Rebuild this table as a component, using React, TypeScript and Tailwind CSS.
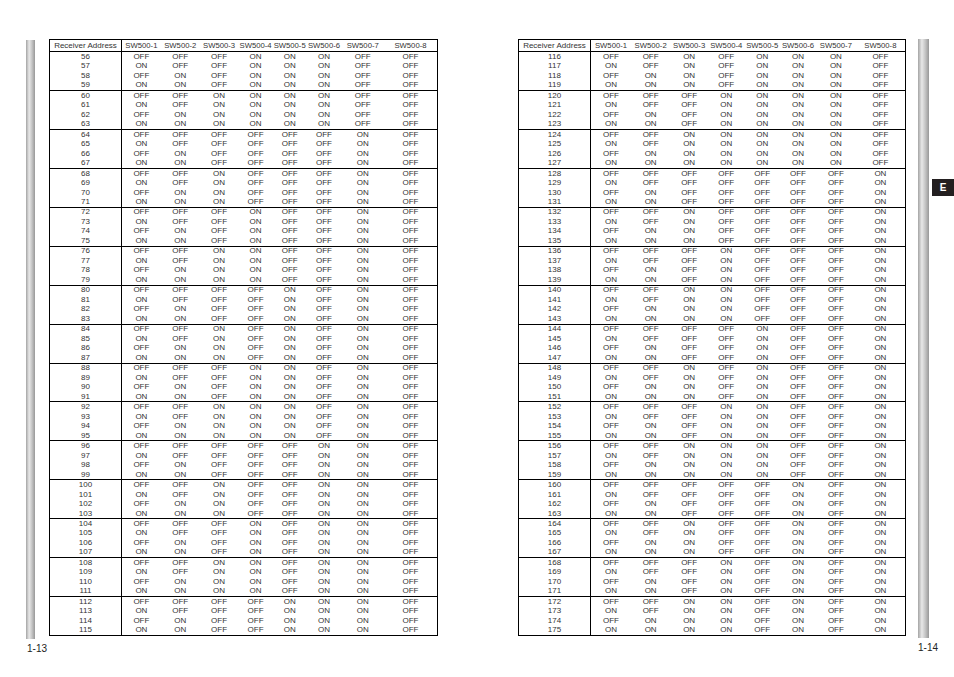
const SWITCHES = [1, 2, 3, 4, 5, 6, 7, 8];

const leftCols =
  "grid-cols-[72px_38.75px_39px_38.6px_34.5px_33.65px_35px_42.5px_1fr]";
const rightCols =
  "grid-cols-[72px_40px_39.25px_37.75px_36.5px_35.5px_36px_39.75px_1fr]";

function groupsFrom(start: number) {
  // 60 addresses, shown in blocks of four
  return Array.from({ length: 15 }, (_, g) =>
    Array.from({ length: 4 }, (_, r) => start + g * 4 + r)
  );
}

function SwitchTable({
  start,
  cols,
  className
}: {
  start: number;
  cols: string;
  className: string;
}) {
  return (
    <div
      className={`flex h-[597px] flex-col border border-black text-[8px] leading-none text-[#333] ${className}`}
    >
      <div
        className={`grid h-[12px] shrink-0 items-center border-b border-black text-[7.7px] ${cols}`}
      >
        <div className="flex h-full items-center justify-center border-r border-black text-[8px]">
          Receiver Address
        </div>
        {SWITCHES.map((n) => (
          <div key={n} className="flex justify-center whitespace-nowrap">
            SW500-{n}
          </div>
        ))}
      </div>
      <div className="flex min-h-0 flex-1 flex-col">
        {groupsFrom(start).map((rows, g) => (
          <div
            key={g}
            className={`flex flex-1 flex-col ${g > 0 ? "border-t border-black" : ""}`}
          >
            {rows.map((addr) => (
              <div key={addr} className={`grid flex-1 items-center ${cols}`}>
                <div className="flex h-full items-center justify-center border-r border-black">
                  {addr}
                </div>
                {SWITCHES.map((n) => (
                  <div key={n} className="flex justify-center">
                    {(addr >> (n - 1)) & 1 ? "ON" : "OFF"}
                  </div>
                ))}
              </div>
            ))}
          </div>
        ))}
      </div>
    </div>
  );
}

function EdgeBar({ className }: { className: string }) {
  return (
    <div
      className={`h-[599px] shrink-0 bg-[linear-gradient(to_right,#a4a4a4,#e8e8e8_35%,#c6c6c6_65%,#989898)] ${className}`}
    />
  );
}

export default function App() {
  return (
    <div className="flex h-[677px] w-[954px] overflow-hidden bg-white font-['Liberation_Sans',Arial,sans-serif] text-black">
      <section className="flex w-[477px] flex-col pt-[39px]">
        <div className="flex items-start pl-[26px]">
          <EdgeBar className="mt-[1px] w-[9px]" />
          <SwitchTable start={56} cols={leftCols} className="ml-[14px] w-[389px]" />
        </div>
        <div className="mt-[5px] pl-[27px] text-[10px] leading-[10px] text-[#222]">1-13</div>
      </section>

      <section className="flex w-[477px] flex-col pt-[39px]">
        <div className="flex items-start pl-[41px]">
          <SwitchTable start={116} cols={rightCols} className="w-[388px]" />
          <EdgeBar className="ml-[12px] w-[11px]" />
          <div className="ml-[3px] mt-[140px] flex h-[17px] w-[22px] items-center justify-center bg-[#231f20] text-[10px] font-bold leading-none text-white">
            E
          </div>
        </div>
        <div className="mt-[5px] pl-[441px] text-[10px] leading-[10px] text-[#222]">1-14</div>
      </section>
    </div>
  );
}
